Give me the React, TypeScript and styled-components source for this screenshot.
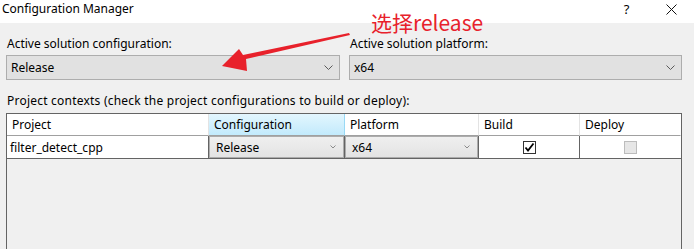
import React from "react";
import styled, { createGlobalStyle } from "styled-components";

const Global = createGlobalStyle`
  html, body { margin: 0; padding: 0; background: #f0f0f0; overflow: hidden; }
  body { font-family: "Noto Sans", "Noto Sans CJK SC", sans-serif; font-size: 12px; color: #000; }
  #root { width: 694px; height: 249px; }
`;

const Window = styled.div`
  position: relative;
  width: 694px;
  height: 249px;
  display: flex;
  flex-direction: column;
  background: #f0f0f0;
  overflow: hidden;
`;

const TitleBar = styled.div`
  height: 23px;
  flex: 0 0 23px;
  background: #fff;
  display: flex;
  align-items: flex-start;
  padding: 1px 0 0 2px;
  font-size: 12px;
  line-height: 16px;
  box-sizing: border-box;
`;

const TitleText = styled.div`
  flex: 1;
`;

const TitleButton = styled.div<{ $w: number }>`
  width: ${(p) => p.$w}px;
  height: 16px;
  display: flex;
  justify-content: center;
  align-items: center;
  font-size: 13px;
`;

const Body = styled.div`
  display: flex;
  flex-direction: column;
  padding: 13px 12px 0 6px;
`;

const TopRow = styled.div`
  display: grid;
  grid-template-columns: 334px 333px;
  column-gap: 9px;
`;

const Field = styled.div`
  display: flex;
  flex-direction: column;
`;

const Label = styled.div`
  line-height: 16px;
  height: 16px;
  margin-bottom: 3px;
  padding-left: 1px;
`;

const Combo = styled.div`
  height: 25px;
  box-sizing: border-box;
  border: 1px solid #adadad;
  background: #e1e1e1;
  display: flex;
  align-items: center;
  padding: 0 6px 0 4px;
`;

const ComboText = styled.div`
  flex: 1;
`;

const SectionLabel = styled.div`
  margin-top: 13px;
  line-height: 16px;
  height: 16px;
  padding-left: 1px;
  letter-spacing: 0.22px;
`;

const Table = styled.div`
  margin-top: 4px;
  width: 676px;
  height: 160px;
  box-sizing: border-box;
  border: 1px solid #646464;
  border-bottom: none;
  display: flex;
  flex-direction: column;
`;

const Grid = styled.div`
  display: grid;
  grid-template-columns: 202px 136px 134px 101px 101px;
`;

const HeadCell = styled.div<{ $active?: boolean; $last?: boolean }>`
  height: 22px;
  box-sizing: border-box;
  display: flex;
  align-items: center;
  padding-left: 5px;
  background: ${(p) => (p.$active ? "linear-gradient(#e3f6fe, #c2eafc)" : "#fff")};
  border-right: 1px solid ${(p) => (p.$active ? "#99d9f5" : p.$last ? "transparent" : "#e3e3e3")};
  border-bottom: 1px solid #a0a0a0;
`;

const Cell = styled.div<{ $center?: boolean; $last?: boolean }>`
  height: 23px;
  box-sizing: border-box;
  display: flex;
  align-items: center;
  justify-content: ${(p) => (p.$center ? "center" : "flex-start")};
  background: #fff;
  border-right: ${(p) => (p.$last ? "none" : "1px solid #646464")};
  border-bottom: 1px solid #646464;
  padding-left: ${(p) => (p.$center ? "0" : "3px")};
`;

const ComboCell = styled.div`
  height: 23px;
  box-sizing: border-box;
  border-right: 1px solid #646464;
  border-bottom: 1px solid #646464;
  background: #fff;
  display: flex;
`;

const CellCombo = styled.div`
  flex: 1;
  box-sizing: border-box;
  border: 1px solid #acacac;
  background: linear-gradient(#efefef, #e3e3e3);
  display: flex;
  align-items: center;
  padding: 0 7px 0 6px;
`;

const Check = styled.div<{ $disabled?: boolean }>`
  width: 13px;
  height: 13px;
  box-sizing: border-box;
  border: 1px solid ${(p) => (p.$disabled ? "#bcbcbc" : "#333")};
  background: ${(p) => (p.$disabled ? "#e6e6e6" : "#fff")};
  display: flex;
  align-items: center;
  justify-content: center;
`;

const Annotation = styled.div`
  position: absolute;
  left: 371px;
  top: 9px;
  font-size: 21px;
  line-height: 27px;
  color: #e8212b;
  font-family: "Noto Sans CJK SC", "Noto Sans", sans-serif;
`;

const ArrowSvg = styled.svg`
  position: absolute;
  left: 0;
  top: 0;
  pointer-events: none;
`;

const Chevron = ({ small }: { small?: boolean }) =>
  small ? (
    <svg width="6" height="4" viewBox="0 0 6 4">
      <path d="M0.5 0.5 L3 3 L5.5 0.5" fill="none" stroke="#8a8a8a" strokeWidth="1" />
    </svg>
  ) : (
    <svg width="9" height="5" viewBox="0 0 9 5">
      <path d="M0.5 0.5 L4.5 4.5 L8.5 0.5" fill="none" stroke="#5a5a5a" strokeWidth="1" />
    </svg>
  );

export default function App() {
  return (
    <>
      <Global />
      <Window>
        <TitleBar>
          <TitleText>Configuration Manager</TitleText>
          <TitleButton $w={45}>?</TitleButton>
          <TitleButton $w={45}>
            <svg width="11" height="11" viewBox="0 0 11 11">
              <path d="M0.5 0.5 L10.5 10.5 M10.5 0.5 L0.5 10.5" stroke="#111" strokeWidth="1" />
            </svg>
          </TitleButton>
        </TitleBar>
        <Body>
          <TopRow>
            <Field>
              <Label>Active solution configuration:</Label>
              <Combo>
                <ComboText>Release</ComboText>
                <Chevron />
              </Combo>
            </Field>
            <Field>
              <Label>Active solution platform:</Label>
              <Combo>
                <ComboText>x64</ComboText>
                <Chevron />
              </Combo>
            </Field>
          </TopRow>
          <SectionLabel>
            Project contexts (check the project configurations to build or deploy):
          </SectionLabel>
          <Table>
            <Grid>
              <HeadCell>Project</HeadCell>
              <HeadCell $active>Configuration</HeadCell>
              <HeadCell>Platform</HeadCell>
              <HeadCell>Build</HeadCell>
              <HeadCell $last>Deploy</HeadCell>
              <Cell>filter_detect_cpp</Cell>
              <ComboCell>
                <CellCombo>
                  <ComboText>Release</ComboText>
                  <Chevron small />
                </CellCombo>
              </ComboCell>
              <ComboCell>
                <CellCombo>
                  <ComboText>x64</ComboText>
                  <Chevron small />
                </CellCombo>
              </ComboCell>
              <Cell $center>
                <Check>
                  <svg width="11" height="11" viewBox="0 0 11 11">
                    <path d="M1.5 5.5 L4 8.5 L9.5 1.5" fill="none" stroke="#000" strokeWidth="1.8" />
                  </svg>
                </Check>
              </Cell>
              <Cell $center $last>
                <Check $disabled />
              </Cell>
            </Grid>
          </Table>
        </Body>
        <Annotation>选择release</Annotation>
        <ArrowSvg width="694" height="249" viewBox="0 0 694 249">
          <polygon
            points="349,33 350,35 246,59 247,71 222,66 239,49 243,55"
            fill="#e8212b"
          />
        </ArrowSvg>
      </Window>
    </>
  );
}
